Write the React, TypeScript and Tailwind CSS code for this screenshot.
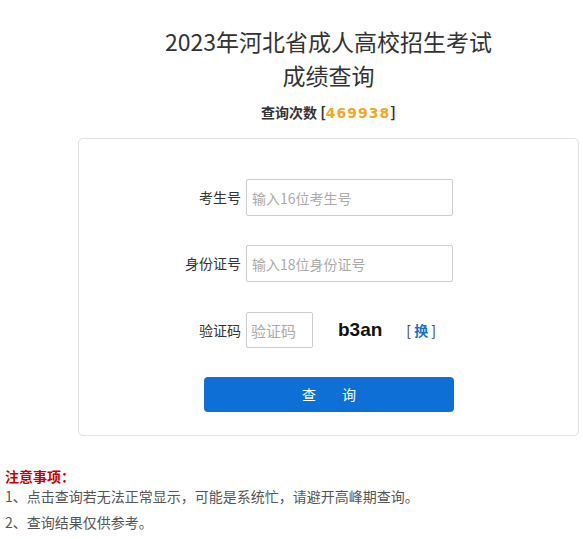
import React from "react";

const font = { fontFamily: '"Noto Sans CJK SC", "Noto Sans", sans-serif' };

export default function App() {
  return (
    <div className="w-[583px] h-[539px] bg-white text-[#333] overflow-hidden" style={font}>
      <div className="ml-[78px] w-[501px] flex flex-col items-center">
        <div className="pt-[24px] text-[23px] leading-[34px] text-[#333] text-center">
          <div>2023年河北省成人高校招生考试</div>
          <div>成绩查询</div>
        </div>
        <div className="mt-[10px] text-[14px] leading-[20px] font-bold text-[#333]">
          查询次数 <span className="text-[15px]">[</span>
          <span className="text-[#f5a623] tracking-[1px]" style={{ fontFamily: '"DejaVu Sans", sans-serif', fontSize: 14 }}>469938</span>
          <span className="text-[15px]">]</span>
        </div>
        <div className="mt-[15px] w-[501px] h-[298px] border border-[#e2e2e2] rounded-[5px] pt-[40px] flex flex-col">
          <div className="flex items-center h-[37px]">
            <div className="w-[162px] text-right text-[14px] text-[#333]">考生号</div>
            <input
              className="ml-[5px] w-[207px] h-[37px] border border-[#ccc] rounded-[2px] px-[5px] text-[14px] outline-none placeholder:text-[#aaa]"
              placeholder="输入16位考生号"
            />
          </div>
          <div className="flex items-center h-[37px] mt-[29px]">
            <div className="w-[162px] text-right text-[14px] text-[#333]">身份证号</div>
            <input
              className="ml-[5px] w-[207px] h-[37px] border border-[#ccc] rounded-[2px] px-[5px] text-[14px] outline-none placeholder:text-[#aaa]"
              placeholder="输入18位身份证号"
            />
          </div>
          <div className="flex items-center h-[36px] mt-[30px]">
            <div className="w-[162px] text-right text-[14px] text-[#333]">验证码</div>
            <input
              className="ml-[5px] w-[67px] h-[36px] border border-[#ccc] rounded-[2px] px-[4px] text-[15px] outline-none placeholder:text-[#aaa]"
              placeholder="验证码"
            />
            <div
              className="ml-[25px] text-[19px] font-bold text-[#111]"
              style={{ fontFamily: '"Liberation Sans", Arial, sans-serif' }}
            >
              b3an
            </div>
            <div className="ml-[24px] text-[14px] text-[#333]">
              [ <span className="text-[#1a6fc9] font-bold">换</span> ]
            </div>
          </div>
          <button className="mt-[29px] ml-[125px] w-[250px] h-[35px] rounded-[4px] bg-[#0e6fd6] text-white text-[14px] tracking-[0px]">
            查<span className="inline-block w-[26px]"></span>询
          </button>
        </div>
      </div>
      <div className="mt-[30px] pl-[5px] text-[14px]">
        <div className="leading-[20px] font-bold text-[#c00]">注意事项：</div>
        <div className="leading-[20px] text-[#555]">1、点击查询若无法正常显示，可能是系统忙，请避开高峰期查询。</div>
        <div className="mt-[6px] leading-[20px] text-[#555]">2、查询结果仅供参考。</div>
      </div>
    </div>
  );
}
